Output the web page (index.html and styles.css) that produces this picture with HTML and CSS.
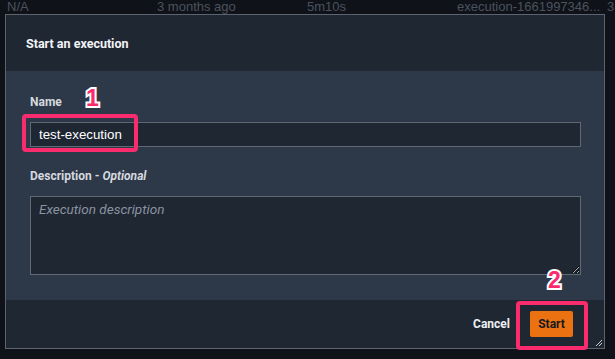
FILE: index.html
```html
<!DOCTYPE html>
<html>
<head>
<meta charset="utf-8">
<link rel="stylesheet" href="styles.css">
</head>
<body>
<div class="table-row">
  <span class="cell">N/A</span>
  <span class="cell">3 months ago</span>
  <span class="cell">5m10s</span>
  <span class="cell">execution-1661997346...</span>
  <span class="cell cell-last">3</span>
</div>
<div class="modal">
  <div class="modal-header">Start an execution</div>
  <div class="modal-body">
    <label class="label" for="name">Name</label>
    <input id="name" class="input" type="text" value="test-execution">
    <label class="label label-desc" for="desc">Description - <em>Optional</em></label>
    <textarea id="desc" class="textarea" placeholder="Execution description"></textarea>
  </div>
  <div class="modal-footer">
    <button class="btn-link">Cancel</button>
    <button class="btn-primary">Start</button>
  </div>
  <svg class="resize" width="7" height="7" viewBox="0 0 7 7"><path d="M1 7 L7 1 M4 7 L7 4" stroke="#c9ced6" stroke-width="1"/></svg>
  <div class="hl hl-name"></div>
  <div class="hl hl-start"></div>
  <span class="num num-1">1</span>
  <span class="num num-2">2</span>
</div>
</body>
</html>
```
FILE: styles.css
```css
html, body {
  margin: 0;
  padding: 0;
  background: #0f1319;
  width: 615px;
  height: 359px;
  overflow: hidden;
  font-family: Roboto, "Liberation Sans", sans-serif;
}
.table-row {
  display: flex;
  width: 608px;
  height: 14px;
  padding-left: 7px;
  overflow: hidden;
}
.cell {
  width: 150px;
  flex: none;
  font-family: "Liberation Sans", Arial, sans-serif;
  font-size: 13px;
  line-height: 14px;
  color: #4b525e;
  white-space: nowrap;
}
.cell-last {
  width: 8px;
  overflow: hidden;
}
.modal {
  position: relative;
  margin-left: 5px;
  width: 598px;
  height: 333px;
  border: 1px solid #5d6470;
  background: #1f2733;
  display: flex;
  flex-direction: column;
}
.modal-header {
  height: 56px;
  box-sizing: border-box;
  padding: 21px 0 0 20px;
  font-weight: 700;
  font-size: 12.5px;
  line-height: 16px;
  color: #f2f4f7;
}
.modal-body {
  background: #2d3848;
  height: 229px;
  box-sizing: border-box;
  padding: 23px 23px 0 24px;
  display: flex;
  flex-direction: column;
}
.label {
  font-weight: 700;
  font-size: 12px;
  line-height: 16px;
  color: #d5d9df;
}
.label em {
  font-style: italic;
}
.input {
  margin-top: 12px;
  height: 25px;
  box-sizing: border-box;
  border: 1px solid #626873;
  background: #1f2733;
  color: #ffffff;
  font-family: "Liberation Sans", Arial, sans-serif;
  font-size: 13.3px;
  padding: 0 8px;
  border-radius: 0;
  outline: none;
}
.label-desc {
  margin-top: 21px;
}
.textarea {
  margin-top: 12px;
  height: 79px;
  box-sizing: border-box;
  border: 1px solid #626873;
  background: #1f2733;
  color: #ffffff;
  font-family: Roboto, sans-serif;
  font-style: italic;
  font-size: 13.5px;
  padding: 4px 8px;
  border-radius: 0;
  outline: none;
  resize: vertical;
  color-scheme: dark;
}
.textarea::placeholder {
  color: #8a93a0;
  font-style: italic;
}
.modal-footer {
  flex: 1;
  display: flex;
  justify-content: flex-end;
  align-items: center;
  gap: 20px;
  padding-right: 31px;
}
.btn-link {
  background: none;
  border: none;
  padding: 0;
  color: #eef0f3;
  font-family: Roboto, sans-serif;
  font-weight: 700;
  font-size: 12px;
}
.btn-primary {
  background: #ec7211;
  border: none;
  border-radius: 2px;
  width: 43px;
  height: 26px;
  padding: 0;
  color: #16191f;
  font-family: Roboto, sans-serif;
  font-weight: 700;
  font-size: 12px;
}
.resize {
  position: absolute;
  right: 2px;
  bottom: 2px;
}
.hl {
  position: absolute;
  border: 4px solid #fb2c6e;
  border-radius: 4px;
  box-sizing: border-box;
}
.hl-name {
  left: 16px;
  top: 99px;
  width: 116px;
  height: 38px;
}
.hl-start {
  left: 510px;
  top: 286px;
  width: 72px;
  height: 49px;
}
.num {
  position: absolute;
  font-family: "Liberation Sans", Arial, sans-serif;
  font-weight: 700;
  font-size: 23px;
  line-height: 23px;
  color: #fb2c6e;
  -webkit-text-stroke: 4px #ffffff;
  paint-order: stroke fill;
}
.num-1 {
  left: 80px;
  top: 72px;
}
.num-2 {
  left: 542px;
  top: 254px;
}
```
